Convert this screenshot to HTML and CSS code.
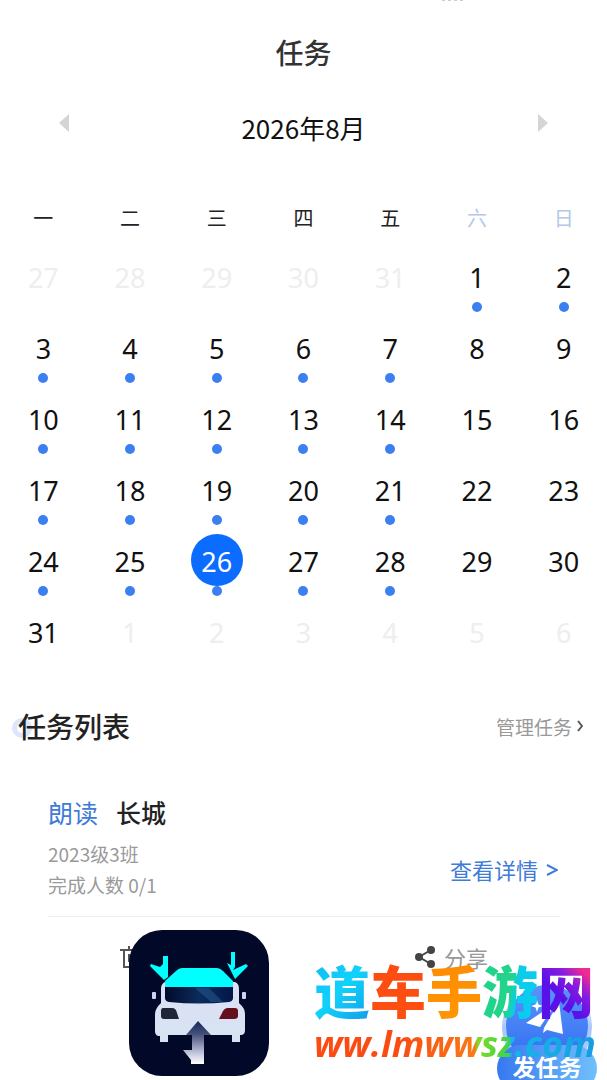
FILE: index.html
```
<!DOCTYPE html>
<html lang="zh-CN">
<head>
    <meta charset="UTF-8">
    <meta name="viewport" content="width=device-width, initial-scale=1.0">
    <title>任务</title>
    <link rel="stylesheet" href="styles.css">
</head>
<body>
    <div class="status"><i></i><i></i><i></i><i></i></div>
    <h1>任务</h1>

    <div class="month">
        <button type="button" aria-label="上个月"><svg width="12" height="18" viewBox="0 0 12 18"><path d="M11 0v18L1 9z"/></svg></button>
        <h2>2026年8月</h2>
        <button type="button" aria-label="下个月"><svg width="12" height="18" viewBox="0 0 12 18"><path d="M1 0v18l10-9z"/></svg></button>
    </div>

    <div class="week">
        <span>一</span><span>二</span><span>三</span><span>四</span><span>五</span><span class="weekend">六</span><span class="weekend">日</span>
    </div>

    <div class="days">
        <button type="button" class="other">27</button>
        <button type="button" class="other">28</button>
        <button type="button" class="other">29</button>
        <button type="button" class="other">30</button>
        <button type="button" class="other">31</button>
        <button type="button" class="dot">1</button>
        <button type="button" class="dot">2</button>

        <button type="button" class="dot">3</button>
        <button type="button" class="dot">4</button>
        <button type="button" class="dot">5</button>
        <button type="button" class="dot">6</button>
        <button type="button" class="dot">7</button>
        <button type="button">8</button>
        <button type="button">9</button>

        <button type="button" class="dot">10</button>
        <button type="button" class="dot">11</button>
        <button type="button" class="dot">12</button>
        <button type="button" class="dot">13</button>
        <button type="button" class="dot">14</button>
        <button type="button">15</button>
        <button type="button">16</button>

        <button type="button" class="dot">17</button>
        <button type="button" class="dot">18</button>
        <button type="button" class="dot">19</button>
        <button type="button" class="dot">20</button>
        <button type="button" class="dot">21</button>
        <button type="button">22</button>
        <button type="button">23</button>

        <button type="button" class="dot">24</button>
        <button type="button" class="dot">25</button>
        <button type="button" class="dot today"><span>26</span></button>
        <button type="button" class="dot">27</button>
        <button type="button" class="dot">28</button>
        <button type="button">29</button>
        <button type="button">30</button>

        <button type="button">31</button>
        <button type="button" class="other">1</button>
        <button type="button" class="other">2</button>
        <button type="button" class="other">3</button>
        <button type="button" class="other">4</button>
        <button type="button" class="other">5</button>
        <button type="button" class="other">6</button>
    </div>

    <div class="list-head">
        <h3>任务列表</h3>
        <a href="#">管理任务<svg width="6" height="12" viewBox="0 0 6 12"><path d="M1 1l4 5-4 5"/></svg></a>
    </div>

    <div class="task">
        <div class="task-name"><span>朗读</span>长城</div>
        <div class="task-row">
            <div class="task-info">
                <div>2023级3班</div>
                <div>完成人数 0/1</div>
            </div>
            <a href="#">查看详情<svg width="12" height="14" viewBox="0 0 12 14"><path d="M1 3l10 5-10 5"/></svg></a>
        </div>
        <div class="actions">
            <button type="button" aria-label="删除">
                <svg class="trash" width="22" height="22" viewBox="0 0 22 22"><path d="M0 4h22M9 0v4M4 4v17h14V4M9 8v8M13 8v8"/></svg>
            </button>
            <button type="button">
                <svg class="share" width="20" height="22" viewBox="0 0 20 22"><path d="M16 4L4 11l12 7"/><circle cx="16" cy="4" r="4"/><circle cx="4" cy="11" r="4"/><circle cx="16" cy="18" r="4"/></svg>
                分享
            </button>
        </div>
    </div>

    <button type="button" class="publish">
        <svg width="90" height="90" viewBox="0 0 90 90">
            <defs>
                <linearGradient id="ball" x1="0" y1="0" x2="0" y2="1"><stop offset="0" stop-color="#5b93fb"/><stop offset="1" stop-color="#2f6cf0"/></linearGradient>
                <linearGradient id="halo" x1="0" y1="0" x2="0" y2="1"><stop offset=".1" stop-color="#a9c8fb" stop-opacity="0"/><stop offset=".5" stop-color="#a9c8fb"/></linearGradient>
            </defs>
            <circle cx="45" cy="45" r="45" fill="url(#halo)"/>
            <circle cx="45" cy="44" r="41" fill="url(#ball)"/>
            <path d="M55 20L24 41l14 4zM57 20L42 46l-1 5 4-3 16 4z" fill="#fff"/>
            <path d="M35 18l1.500 4.500 4.500 1.500-4.500 1.500L35 30l-1.500-4.500L29 24l4.500-1.500z" fill="#fff"/>
        </svg>
        <span>发任务</span>
    </button>

    <div class="brand">
        <svg class="brand-icon" width="140" height="146" viewBox="0 0 140 146">
            <defs>
                <linearGradient id="body" x1="0" y1="0" x2="0" y2="1"><stop offset="0" stop-color="#dcdff5"/><stop offset="1" stop-color="#d7e4f2"/></linearGradient>
                <linearGradient id="glass" x1="0" y1="0" x2="1" y2="0"><stop offset="0" stop-color="#020a2a"/><stop offset=".5" stop-color="#0b2c5c"/><stop offset="1" stop-color="#03164a"/></linearGradient>
                <linearGradient id="arrow" x1="0" y1="0" x2="0" y2="1"><stop offset="0" stop-color="#16285a"/><stop offset=".3" stop-color="#435078"/><stop offset=".75" stop-color="#c5c6df"/><stop offset="1" stop-color="#fff"/></linearGradient>
            </defs>
            <rect width="140" height="146" rx="33" fill="#020827"/>
            <path d="M36 52c-4 2-4 5-4 9v12c-4 4-6 7-6 12v15c0 4 1 6 5 6v6h8v-7h64v7h8v-7c4 0 5-2 5-5V85c0-6-2-8-6-12V61c0-5 0-7-4-9z" fill="url(#body)"/>
            <path d="M36 51l11-10q3-3 6-3h35q3 0 6 3l10 10v6H36z" fill="#0ff"/>
            <path d="M36 57h68v11q0 3-4 4-30 3-60 0-4-1-4-4z" fill="url(#glass)"/>
            <path d="M66 58h14l14 14H82z" fill="#20558a" opacity=".6"/>
            <rect x="23" y="62" width="4" height="7" rx="1" fill="#c8d6f5"/>
            <rect x="113" y="62" width="4" height="7" rx="1" fill="#c8d6f5"/>
            <path d="M34 78h9q4 0 5 5l2 6H35q-3 0-3-3v-5q0-3 2-3z" fill="#202638"/>
            <path d="M106 78h-7q-4 0-6 5l-3 6h15q4 0 4-3v-5q0-3-3-3z" fill="#650f1c"/>
            <path d="M69 91l13 14h-7v29H62v-4l-8-10h9v-15h-6z" fill="url(#arrow)"/>
            <path d="M34 26h5v21l-4 3-14-14 1-2 9 3 3-3zM102 22h4v15l-2 3 13-6 2 2-13 13-8-16 4 2z" fill="#0ff"/>
        </svg>
        <div class="brand-text">
            <div class="brand-name"><span class="c1">道</span><span class="c2">车</span><span class="c3">手</span><span class="c4">游</span><span class="c5">网</span></div>
            <div class="brand-url">ww.lmwwsz.com</div>
        </div>
    </div>
</body>
</html>
```
FILE: styles.css
```
* { box-sizing: border-box; }
body { position: relative; min-height: 100vh; margin: 0; overflow: hidden; background: #fff; color: #222; font-family: "Noto Sans CJK SC", sans-serif; }
h1, h2, h3 { margin: 0; font-weight: 500; }
button { padding: 0; border: none; background: none; color: inherit; font: inherit; }
a { text-decoration: none; }
svg { display: block; }

.status { display: flex; justify-content: flex-end; gap: 3px; height: 24px; padding-right: 144px; }
.status i { width: 3px; height: 1px; background: #ccc; }
h1 { color: #333; font-size: 28px; line-height: 56px; text-align: center; }

.month { display: flex; justify-content: space-between; padding: 24px 58px 0; }
.month button { height: 38px; fill: #d5d5d5; }
.month h2 { color: #111; font-size: 26px; font-weight: 400; line-height: 48px; }

.week { display: grid; grid-template-columns: repeat(7, 1fr); margin-top: 50px; color: #222; font-size: 20px; line-height: 32px; text-align: center; }
.weekend { color: #b3c9e6; }

.days { display: grid; grid-template-columns: repeat(7, 1fr); grid-auto-rows: 71px; margin-top: 16px; font-family: "Noto Sans", "Noto Sans CJK SC", sans-serif; font-size: 27px; line-height: 55px; }
.days button { display: flex; flex-direction: column; align-items: center; color: #111; }
.days .other { color: #eee; }
.dot::after { content: ""; width: 10px; height: 10px; margin-top: -3px; border-radius: 50%; background: #3c7ff0; }
.days .today { color: #fff; }
.today span { width: 52px; height: 52px; margin-bottom: 3px; border-radius: 50%; background: #0b6cff; }

.list-head { display: flex; justify-content: space-between; align-items: center; margin-top: 26px; padding: 0 24px 0 18px; }
.list-head h3 { font-size: 28px; line-height: 48px; }
.list-head h3::before { content: ""; position: absolute; z-index: -1; box-sizing: border-box; width: 20px; height: 20px; margin: 16px 0 0 -6px; border: 5px solid #dde6fa; border-radius: 50%; }
.list-head a { display: flex; align-items: center; gap: 5px; color: #999; font-size: 19px; }
.list-head svg { fill: none; stroke: #555; stroke-width: 2px; }

.task { padding: 44px 47px 0 48px; }
.task-name { display: flex; gap: 18px; font-size: 25px; font-weight: 500; line-height: 36px; }
.task-name span { color: #3f7bd8; font-weight: 400; }
.task-row { display: flex; justify-content: space-between; align-items: center; padding: 8px 0 16px; border-bottom: 1px solid #eee; }
.task-info { color: #999; font-size: 19px; line-height: 31px; }
.task-row a { display: flex; align-items: center; gap: 8px; padding-right: 2px; color: #3f7bd8; font-size: 22px; }
.task-row svg { fill: none; stroke: #3f7bd8; stroke-width: 2px; }
.actions { display: flex; justify-content: space-between; padding: 20px 72px 0; }
.actions button { display: flex; align-items: center; gap: 9px; color: #999; font-size: 22px; line-height: 40px; }
.trash { fill: none; stroke: #555; stroke-width: 2px; }
.share { fill: #444; }
.share path { fill: none; stroke: #444; stroke-width: 2px; }

.publish { position: absolute; right: 10px; bottom: -12px; display: flex; flex-direction: column; align-items: center; width: 100px; height: 110px; }
.publish span { position: absolute; left: 0; bottom: 0; width: 100px; height: 47px; border-radius: 24px; background: linear-gradient(90deg, #3778ef, #6fc0fc); color: #fff; font-size: 23px; font-weight: 700; line-height: 42px; }

.brand { position: absolute; right: 13px; bottom: 4px; display: flex; align-items: flex-end; gap: 45px; }
.brand-text { width: 280px; padding-bottom: 7px; }
.brand-name { font-size: 56px; font-weight: 900; line-height: 60px; white-space: nowrap; }
.brand-name span { background-clip: text; -webkit-background-clip: text; color: transparent; }
.c1 { background-image: linear-gradient(135deg, #14b5f5, #10d2fa, #1595e8); }
.c2 { background-image: linear-gradient(#ff4b12, #fb5010); }
.c3 { background-image: linear-gradient(#ff8a00, #ff9705); }
.c4 { background-image: linear-gradient(100deg, #22d38b 50%, #08cdee 62%); }
.c5 { background-image: linear-gradient(45deg, #5a10e8 40%, #8a1be0 60%, #f02a90 75%); }
.brand-url { width: max-content; background: linear-gradient(90deg, #fb4a12 30%, #f87a16 57%, #7edb25 58%, #3fd34a 69%, #12b9e8 70%, #1a9be0); background-clip: text; -webkit-background-clip: text; color: transparent; font: italic 700 36px/50px "Open Sans", sans-serif; }
```
